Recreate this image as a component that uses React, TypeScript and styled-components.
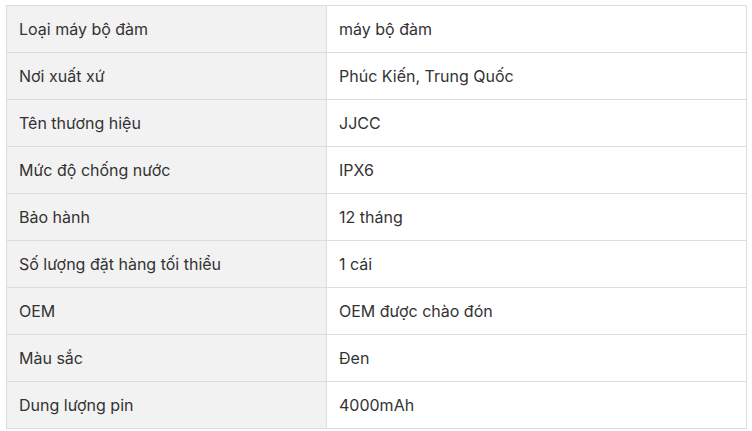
import React from "react";
import styled, { createGlobalStyle } from "styled-components";

const Global = createGlobalStyle`
  html, body { margin: 0; padding: 0; background: #fff; }
  body { font-family: Inter, "Noto Sans", sans-serif; }
`;

const Wrap = styled.div`
  padding: 5px 0 0 6px;
`;

const Table = styled.table`
  width: 741px;
  border-collapse: collapse;
  table-layout: fixed;
  font-family: Inter, "Noto Sans", sans-serif;
  font-size: 16px;
  color: #333;
`;

const Row = styled.tr`
  height: 47px;
`;

const Cell = styled.td<{ $label?: boolean }>`
  border: 1px solid #dddddd;
  padding: 0 12px;
  vertical-align: middle;
  background: ${(p) => (p.$label ? "#f2f2f2" : "#fff")};
  width: ${(p) => (p.$label ? "320px" : "auto")};
  box-sizing: border-box;
`;

const rows: [string, string][] = [
  ["Loại máy bộ đàm", "máy bộ đàm"],
  ["Nơi xuất xứ", "Phúc Kiến, Trung Quốc"],
  ["Tên thương hiệu", "JJCC"],
  ["Mức độ chống nước", "IPX6"],
  ["Bảo hành", "12 tháng"],
  ["Số lượng đặt hàng tối thiểu", "1 cái"],
  ["OEM", "OEM được chào đón"],
  ["Màu sắc", "Đen"],
  ["Dung lượng pin", "4000mAh"],
];

export default function App() {
  return (
    <>
      <Global />
      <Wrap>
        <Table>
          <tbody>
            {rows.map(([k, v]) => (
              <Row key={k}>
                <Cell $label>{k}</Cell>
                <Cell>{v}</Cell>
              </Row>
            ))}
          </tbody>
        </Table>
      </Wrap>
    </>
  );
}
